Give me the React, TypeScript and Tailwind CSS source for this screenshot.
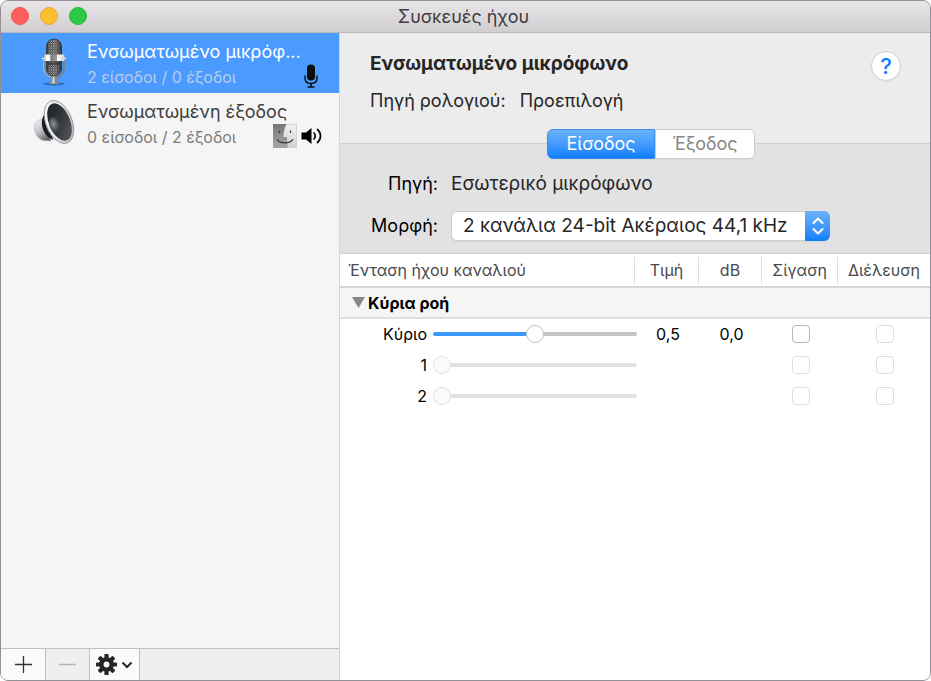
import { useState } from "react"
import clsx from "clsx"

const devices = [
  { id: "mic", name: "Ενσωματωμένο μικρόφ...", detail: "2 είσοδοι / 0 έξοδοι" },
  { id: "speaker", name: "Ενσωματωμένη έξοδος", detail: "0 είσοδοι / 2 έξοδοι" },
]

const channels = [
  { label: "Κύριο", value: 0.5, level: "0,5", db: "0,0", enabled: true },
  { label: "1", value: 0, level: "", db: "", enabled: false },
  { label: "2", value: 0, level: "", db: "", enabled: false },
]

function StudioMic() {
  return (
    <svg width="26" height="48" viewBox="0 0 26 48" aria-hidden="true">
      <defs>
        <pattern id="mesh" width="2.4" height="2.4" patternUnits="userSpaceOnUse">
          <rect width="2.4" height="2.4" fill="#2e2e2e" />
          <circle cx="0.8" cy="0.8" r="0.75" fill="#dcdcdc" />
          <circle cx="2" cy="2" r="0.5" fill="#b5b5b5" />
        </pattern>
        <linearGradient id="body" x1="0" x2="1">
          <stop offset="0" stopColor="#111" stopOpacity="0.7" />
          <stop offset="0.4" stopColor="#888" stopOpacity="0" />
          <stop offset="1" stopColor="#111" stopOpacity="0.7" />
        </linearGradient>
        <linearGradient id="band" x1="0" x2="1">
          <stop offset="0" stopColor="#8d8d8d" />
          <stop offset="0.15" stopColor="#fff" />
          <stop offset="0.32" stopColor="#f4f4f4" />
          <stop offset="0.34" stopColor="#7c7c7c" />
          <stop offset="0.62" stopColor="#9c9c9c" />
          <stop offset="0.66" stopColor="#fff" />
          <stop offset="1" stopColor="#d0d0d0" />
        </linearGradient>
      </defs>
      <ellipse cx="13" cy="45.8" rx="11" ry="1.6" fill="#16325c" opacity="0.45" />
      <path d="M3 19v11c0 6 4 9.500 10 9.500S23 36 23 30V19" fill="none" stroke="#777f8a" strokeWidth="1.800" />
      <path d="M2.600 19v11c0 6 4 9.500 10 9.500" fill="none" stroke="#d5dae0" strokeWidth="0.700" />
      <path d="M10.500 38h5l1 6.500 2.500 1.500H7l2.500-1.500z" fill="#8a8a8a" />
      <path d="M12 38h1.500v7.500H11z" fill="#d6d6d6" />
      <rect x="5.500" y="1" width="15" height="37" rx="7.500" fill="url(#mesh)" />
      <rect x="5.500" y="1" width="15" height="37" rx="7.500" fill="url(#body)" stroke="#303030" strokeWidth="0.800" />
      <rect x="2.500" y="16.500" width="21" height="6.500" rx="1" fill="url(#band)" />
      <path d="M7 24h12v3H7z" fill="#242424" opacity="0.5" />
      <path d="M1 20.500h3M22 20.500h3" stroke="#ddd" strokeWidth="1.600" />
    </svg>
  )
}

function SpeakerCone() {
  return (
    <svg width="42" height="46" viewBox="0 0 42 46" aria-hidden="true">
      <defs>
        <linearGradient id="magnet" x1="0" y1="0" x2="0.7" y2="1">
          <stop offset="0" stopColor="#fafafc" />
          <stop offset="0.5" stopColor="#c3c3cc" />
          <stop offset="1" stopColor="#5f5f68" />
        </linearGradient>
        <linearGradient id="rim" x1="0" y1="0" x2="1" y2="1">
          <stop offset="0" stopColor="#fff" />
          <stop offset="0.5" stopColor="#e6e6ea" />
          <stop offset="1" stopColor="#a5a5ac" />
        </linearGradient>
        <linearGradient id="cone" x1="0" y1="0" x2="0.6" y2="1">
          <stop offset="0" stopColor="#1c1e20" />
          <stop offset="0.6" stopColor="#34373a" />
          <stop offset="1" stopColor="#515457" />
        </linearGradient>
        <radialGradient id="dome" cx="0.4" cy="0.4">
          <stop offset="0" stopColor="#8b8e92" />
          <stop offset="1" stopColor="#3c3f43" />
        </radialGradient>
      </defs>
      <path d="M9 21c-4-1-7.500 2-7.500 8s4 11 8.500 12.500l8 .5-6-20z" fill="url(#magnet)" stroke="#a6a6ae" strokeWidth="0.600" />
      <path d="M11 16c-4 5-2.500 16 4 22l5 3L14 18z" fill="#1b1b1d" />
      <path d="M12 6c-3 9 0 25 9 34 4 3 9 4.500 13 3.500L14 3z" fill="url(#magnet)" />
      <ellipse cx="26" cy="23" rx="13" ry="22.500" transform="rotate(-22 26 23)" fill="url(#rim)" stroke="#8e8e94" strokeWidth="0.800" />
      <ellipse cx="26.500" cy="23" rx="10.600" ry="19.800" transform="rotate(-22 26.500 23)" fill="url(#cone)" />
      <ellipse cx="22" cy="26" rx="5.500" ry="8" transform="rotate(-22 22 26)" fill="url(#dome)" />
    </svg>
  )
}

function InputBadge() {
  return (
    <svg width="14" height="24" viewBox="0 0 14 24" role="img" aria-label="Προεπιλεγμένη είσοδος">
      <rect x="3" y="0.500" width="8" height="16" rx="4" fill="#0d0d0d" />
      <path d="M1 11.500v2.500c0 3.500 2.500 5.500 6 5.500s6-2 6-5.500v-2.500" fill="none" stroke="#0d0d0d" strokeWidth="1.400" />
      <path d="M7 19.500v3M3.500 23h7" stroke="#0d0d0d" strokeWidth="1.600" />
    </svg>
  )
}

function FinderBadge() {
  return (
    <svg width="24" height="24" viewBox="0 0 24 24" role="img" aria-label="Ήχοι συστήματος">
      <defs>
        <linearGradient id="finderLeft" x1="0" y1="0" x2="0" y2="1">
          <stop offset="0" stopColor="#777" />
          <stop offset="1" stopColor="#a6a6a6" />
        </linearGradient>
        <linearGradient id="finderRight" x1="0" y1="0" x2="0" y2="1">
          <stop offset="0" stopColor="#f0f0f0" />
          <stop offset="1" stopColor="#d2d2d2" />
        </linearGradient>
      </defs>
      <rect x="0.500" y="0.500" width="23" height="23" fill="url(#finderRight)" stroke="#c4c4c4" strokeWidth="0.600" />
      <path d="M0 0h13.500c-2 4-3 8-3 13H14c0 4 .3 7 1 11H0z" fill="url(#finderLeft)" />
      <path d="M6.500 6.500v2.500M17.500 6.500v2.500" stroke="#3a3a3a" strokeWidth="1.200" />
      <path d="M4 15.500c4 4.500 12 4.500 16 0" fill="none" stroke="#3a3a3a" strokeWidth="1.200" />
    </svg>
  )
}

function OutputBadge() {
  return (
    <svg width="22" height="18" viewBox="0 0 22 18" role="img" aria-label="Προεπιλεγμένη έξοδος">
      <path d="M0.500 5.500H5L10.500 1v16L5 12.500H0.500z" fill="#000" />
      <path d="M13 6c1.600 1.600 1.600 4.400 0 6" fill="none" stroke="#000" strokeWidth="1.700" strokeLinecap="round" />
      <path d="M16.500 2.500c4 3.500 4 9.500 0 13" fill="none" stroke="#000" strokeWidth="1.700" strokeLinecap="round" />
    </svg>
  )
}

function Gear() {
  return (
    <svg width="21" height="21" viewBox="0 0 20 20" aria-hidden="true">
      <g fill="#262626">
        {[0, 45, 90, 135].map((a) => (
          <rect key={a} x="8" y="0" width="4" height="20" rx="0.800" transform={`rotate(${a} 10 10)`} />
        ))}
        <circle cx="10" cy="10" r="7" />
      </g>
      <circle cx="10" cy="10" r="2.800" fill="#f8f8f8" />
    </svg>
  )
}

function Sidebar() {
  const [selected, setSelected] = useState("mic")

  return (
    <aside className="flex w-[338px] shrink-0 flex-col bg-[#f5f5f5]">
      <ul className="flex-1">
        {devices.map((device) => {
          const active = device.id === selected
          return (
            <li key={device.id}>
              <button
                type="button"
                onClick={() => setSelected(device.id)}
                className={clsx(
                  "flex h-[60px] w-full items-center pr-4 pl-8 text-left",
                  active ? "bg-[#4a9aff] text-white" : "text-[#3f3f3f]"
                )}
              >
                <span className="flex w-[42px] shrink-0 justify-center pb-0.5">
                  {device.id === "mic" ? <StudioMic /> : <SpeakerCone />}
                </span>
                <span className="flex min-w-0 flex-1 flex-col pl-3">
                  <span className="truncate text-lg leading-7">{device.name}</span>
                  <span className="flex h-[22px] items-center justify-between">
                    <span className={clsx("text-base leading-6", active ? "text-[#b9cdea]" : "text-[#7d7d7d]")}>
                      {device.detail}
                    </span>
                    <span className="flex items-center gap-1 pb-0.5">
                      {device.id === "mic" ? (
                        <span className="pr-[5px]"><InputBadge /></span>
                      ) : (
                        <>
                          <FinderBadge />
                          <OutputBadge />
                        </>
                      )}
                    </span>
                  </span>
                </span>
              </button>
            </li>
          )
        })}
      </ul>
      <footer className="flex h-8 border-t border-[#c0c0c0] bg-[#efefef]">
        <button type="button" aria-label="Προσθήκη" className="flex w-[45px] items-center justify-center border-r border-[#c0c0c0] bg-[#fafafa]">
          <svg width="17" height="17" viewBox="0 0 17 17" aria-hidden="true">
            <path d="M8.500 0v17M0 8.500h17" stroke="#333" strokeWidth="1.300" />
          </svg>
        </button>
        <button type="button" aria-label="Αφαίρεση" disabled className="flex w-11 items-center justify-center border-r border-[#c0c0c0]">
          <svg width="17" height="17" viewBox="0 0 17 17" aria-hidden="true">
            <path d="M0 8.500h17" stroke="#b5b5b5" strokeWidth="1.300" />
          </svg>
        </button>
        <button type="button" aria-label="Ενέργειες" className="flex w-[50px] items-center justify-center gap-1 border-r border-[#c0c0c0] bg-[#fafafa]">
          <Gear />
          <svg width="12" height="8" viewBox="0 0 12 8" aria-hidden="true">
            <path d="M1.500 1.500L6 6l4.500-4.500" fill="none" stroke="#262626" strokeWidth="2" />
          </svg>
        </button>
      </footer>
    </aside>
  )
}

function ChannelRow({ channel }: { channel: (typeof channels)[number] }) {
  const [value, setValue] = useState(channel.value)
  const id = `level-${channel.label}`
  const fill = `linear-gradient(to right, #3b99fc ${value * 100}%, #c4c4c4 ${value * 100}%)`

  return (
    <tr className="h-[31px]">
      <th scope="row" className="font-normal">
        <div className="flex items-center gap-1.5">
          <label htmlFor={id} className="w-[87px] shrink-0 text-right">{channel.label}</label>
          <input
            id={id}
            type="range"
            min={0}
            max={1}
            step={0.01}
            value={value}
            disabled={!channel.enabled}
            onChange={(e) => setValue(Number(e.target.value))}
            style={channel.enabled ? { backgroundImage: fill } : undefined}
            className="h-1 w-[204px] shrink-0 appearance-none rounded-full bg-[#c4c4c4] disabled:bg-[#e2e2e2] [&::-webkit-slider-thumb]:size-[18px] [&::-webkit-slider-thumb]:appearance-none [&::-webkit-slider-thumb]:rounded-full [&::-webkit-slider-thumb]:border [&::-webkit-slider-thumb]:border-[#c2c2c2] [&::-webkit-slider-thumb]:bg-white disabled:[&::-webkit-slider-thumb]:border-[#e2e2e2] disabled:[&::-webkit-slider-thumb]:bg-[#fafafa]"
          />
        </div>
      </th>
      <td className="pl-0.5 text-center">{channel.level}</td>
      <td className="pl-0.5 text-center">{channel.db}</td>
      <td className="pl-0.5">
        <input
          type="checkbox"
          aria-label={`Σίγαση ${channel.label}`}
          disabled={!channel.enabled}
          className="mx-auto block size-[18px] appearance-none rounded border border-[#b4b4b4] bg-white checked:bg-[#3b99fc] disabled:border-[#dedede]"
        />
      </td>
      <td className="pl-0.5">
        <input
          type="checkbox"
          aria-label={`Διέλευση ${channel.label}`}
          disabled
          className="mx-auto block size-[18px] appearance-none rounded border border-[#dedede] bg-white"
        />
      </td>
    </tr>
  )
}

const columns = ["Τιμή", "dB", "Σίγαση", "Διέλευση"]

function ChannelTable() {
  return (
    <div className="flex-1 bg-white">
      <table className="w-full table-fixed border-collapse text-base leading-5">
        <colgroup>
          <col className="w-[295px]" />
          <col className="w-16" />
          <col className="w-[63px]" />
          <col className="w-[76px]" />
          <col />
        </colgroup>
        <thead className="text-[#4a4a4a]">
          <tr className="h-[33px] border-b-2 border-[#d4d4d4]">
            <th className="p-0 font-normal">
              <div className="flex h-[27px] items-center border-r border-[#dcdcdc] pl-2">Ένταση ήχου καναλιού</div>
            </th>
            {columns.map((name) => (
              <th key={name} className="group p-0 font-normal">
                <div className="flex h-[27px] items-center justify-center border-r border-[#dcdcdc] group-last:border-r-0">{name}</div>
              </th>
            ))}
          </tr>
        </thead>
        <tbody className="text-black">
          <tr className="h-[31px] border-b-2 border-[#e0e0e0] bg-[#f5f5f5]">
            <th colSpan={5} className="text-left font-bold">
              <button type="button" aria-expanded="true" className="flex items-center gap-[3px] pl-3">
                <svg width="13" height="11" viewBox="0 0 13 11" aria-hidden="true">
                  <path d="M0 0h13L6.500 11z" fill="#868686" />
                </svg>
                Κύρια ροή
              </button>
            </th>
          </tr>
          {channels.map((channel) => (
            <ChannelRow key={channel.label} channel={channel} />
          ))}
        </tbody>
      </table>
    </div>
  )
}

export default function App() {
  const [tab, setTab] = useState("in")

  return (
    <div className="bg-white">
      <div className="flex min-h-screen flex-col overflow-hidden rounded-lg border border-[#949196] bg-[#ececec] font-['Inter',sans-serif] text-[#262626]">
        <header className="relative flex h-8 items-center justify-center border-b border-[#b9b6b9] bg-linear-to-b from-[#e9e6e9] to-[#d1ced1] pr-1">
          <div className="absolute top-1.5 left-2.5 flex gap-[11px]">
            <button type="button" aria-label="Κλείσιμο" className="size-[18px] rounded-full border border-[#ee544e] bg-[#ff5f5a]" />
            <button type="button" aria-label="Ελαχιστοποίηση" className="size-[18px] rounded-full border border-[#e5a935] bg-[#ffbe2f]" />
            <button type="button" aria-label="Μεγέθυνση" className="size-[18px] rounded-full border border-[#24b53a] bg-[#2aca44]" />
          </div>
          <h1 className="text-lg leading-6 text-[#3f3d40]">Συσκευές ήχου</h1>
        </header>
        <div className="flex flex-1">
          <Sidebar />
          <main className="flex min-w-0 flex-1 flex-col border-l border-[#d4d4d4]">
            <section className="h-[110px] pt-[18px] pr-[29px] pl-[30px]">
              <div className="flex items-start justify-between">
                <h2 className="text-[19px] leading-[26px] font-bold">Ενσωματωμένο μικρόφωνο</h2>
                <button type="button" aria-label="Βοήθεια" className="size-[30px] rounded-full border border-[#d0d0d0] bg-white text-[22px] leading-7 font-medium text-[#0a7cff] shadow-xs">
                  ?
                </button>
              </div>
              <p className="flex gap-[14px] pt-2 text-lg leading-6">
                <span>Πηγή ρολογιού:</span>
                <span>Προεπιλογή</span>
              </p>
            </section>
            <section className="h-[111px] border-t border-b border-[#d0d0d0] bg-[#e2e2e2]">
              <div className="-mt-[15px] flex justify-center pl-8">
                <div className="flex h-[30px] text-lg leading-7 shadow-xs">
                  {[
                    { id: "in", label: "Είσοδος" },
                    { id: "out", label: "Έξοδος" },
                  ].map((t) => (
                    <button
                      key={t.id}
                      type="button"
                      aria-pressed={tab === t.id}
                      onClick={() => setTab(t.id)}
                      className={clsx(
                        "border first:w-[108px] first:rounded-l-md last:w-[100px] last:rounded-r-md",
                        tab === t.id
                          ? "border-[#3a8ff0] bg-linear-to-b from-[#6bb3fa] to-[#087eff] text-white"
                          : "border-[#cdcdcd] bg-white text-[#858585]"
                      )}
                    >
                      {t.label}
                    </button>
                  ))}
                </div>
              </div>
              <div className="grid grid-cols-[98px_379px] items-center gap-x-[13px] pt-3 text-lg">
                <span className="text-right leading-[26px] text-black">Πηγή:</span>
                <span className="text-[19px] leading-[26px]">Εσωτερικό μικρόφωνο</span>
                <label htmlFor="format" className="pt-3.5 text-right leading-[30px] text-black">Μορφή:</label>
                <div className="relative mt-3.5 h-[30px]">
                  <select id="format" className="h-full w-full appearance-none rounded-md border border-[#cdcdcd] bg-white pl-[11px] text-[19px] leading-7 shadow-xs">
                    <option>2 κανάλια 24-bit Ακέραιος 44,1 kHz</option>
                  </select>
                  <span className="pointer-events-none absolute inset-y-0 right-0 flex w-[25px] items-center justify-center rounded-r-md bg-linear-to-b from-[#6bb3fa] to-[#087eff]">
                    <svg width="12" height="20" viewBox="0 0 12 20" aria-hidden="true">
                      <path d="M1.500 7L6 2.500 10.500 7M1.500 13L6 17.500 10.500 13" fill="none" stroke="#fff" strokeWidth="2" strokeLinecap="round" strokeLinejoin="round" />
                    </svg>
                  </span>
                </div>
              </div>
            </section>
            <ChannelTable />
          </main>
        </div>
      </div>
    </div>
  )
}
